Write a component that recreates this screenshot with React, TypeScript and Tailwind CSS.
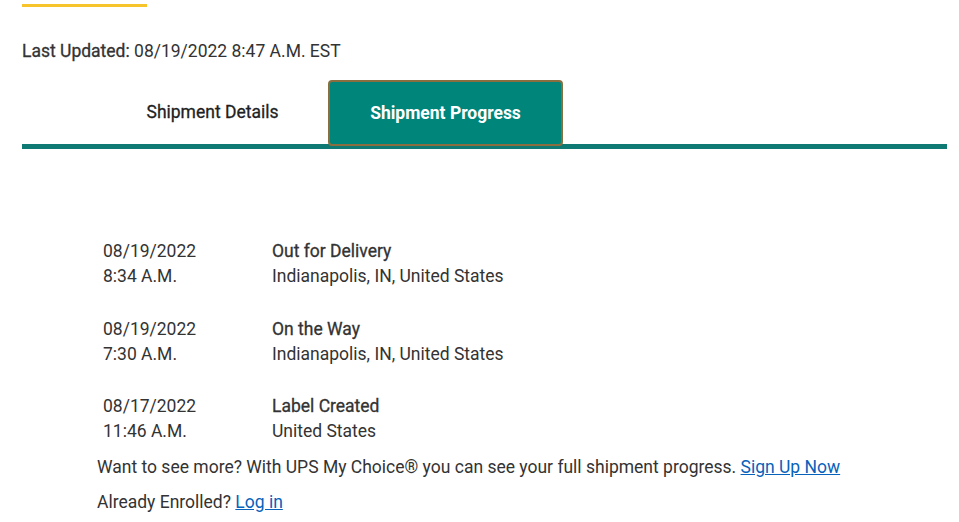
import React from 'react';

const events = [
  { date: '08/19/2022', time: '8:34 A.M.', status: 'Out for Delivery', place: 'Indianapolis, IN, United States' },
  { date: '08/19/2022', time: '7:30 A.M.', status: 'On the Way', place: 'Indianapolis, IN, United States' },
  { date: '08/17/2022', time: '11:46 A.M.', status: 'Label Created', place: 'United States' },
];

const App: React.FC = () => {
  return (
    <div className="w-[959px] h-[522px] overflow-hidden bg-white text-[#333] font-['Roboto',sans-serif]">
      <div className="pl-[22px] pr-[12px] pt-[4px]">
        {/* Accent bar */}
        <div className="w-[125px] h-[3px] bg-[#f7c52b]"></div>

        {/* Last updated */}
        <p className="mt-[34px] text-[17.5px] leading-[20px]">
          <span className="[-webkit-text-stroke:0.3px]">Last Updated:</span> 08/19/2022 8:47 A.M. EST
        </p>

        {/* Tabs */}
        <div className="mt-[19px] flex items-end border-b-[5px] border-[#0f7a73] pl-[71px]">
          <button className="w-[235px] h-[64px] pl-[4px] flex items-center justify-center text-[17.5px] text-[#1f1f1f] [-webkit-text-stroke:0.3px]">
            Shipment Details
          </button>
          <button className="w-[235px] h-[66px] -mb-[2px] flex items-center justify-center rounded-[4px] border-2 border-[#8a6e3f] bg-[#00857b] text-[17.5px] font-bold text-white">
            Shipment Progress
          </button>
        </div>
      </div>

      {/* Timeline */}
      <div className="pl-[103px] pt-[90px] space-y-[27.5px]">
        {events.map((e, i) => (
          <div key={i} className="flex text-[17.5px] leading-[25px]">
            <div className="w-[169px]">
              <div>{e.date}</div>
              <div>{e.time}</div>
            </div>
            <div>
              <div className="[-webkit-text-stroke:0.3px]">{e.status}</div>
              <div>{e.place}</div>
            </div>
          </div>
        ))}
      </div>

      {/* Footer note */}
      <div className="pl-[97px] pt-[6px] text-[17.5px] leading-[35px]">
        <p>
          Want to see more? With UPS My Choice® you can see your full shipment progress.{' '}
          <a href="#" className="text-[#0662bb] underline">Sign Up Now</a>
        </p>
        <p>
          Already Enrolled? <a href="#" className="text-[#0662bb] underline">Log in</a>
        </p>
      </div>
    </div>
  );
};

export default App;
